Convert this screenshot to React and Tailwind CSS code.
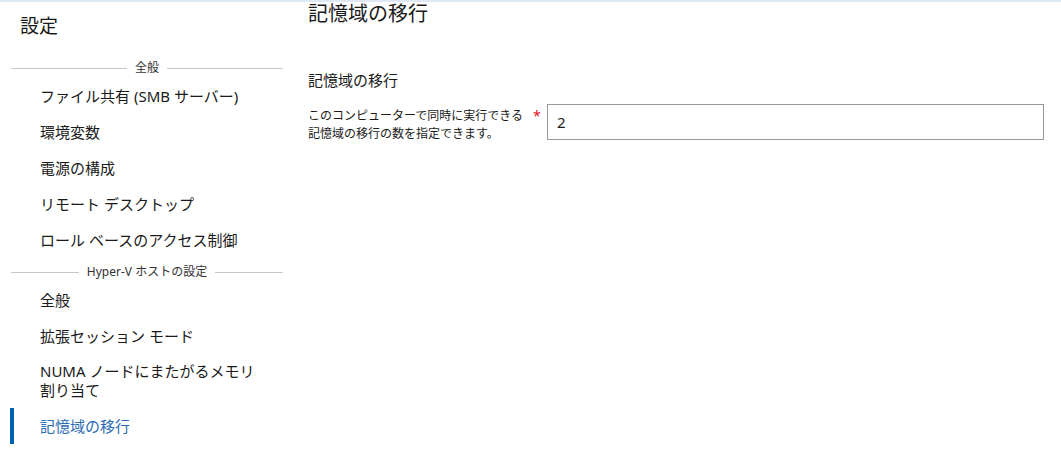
import React from "react";

const font = { fontFamily: '"Noto Sans", "Noto Sans CJK JP", sans-serif' };

const Divider = ({ label }) => (
  <div className="flex h-[20px] items-center gap-[8px] pl-[1px]">
    <div className="h-px flex-1 bg-[#c8c8c8]" />
    <span className="text-[12px] leading-[20px] text-[#333333]">{label}</span>
    <div className="h-px flex-1 bg-[#c8c8c8]" />
  </div>
);

const NavItem = ({ children, active }) => (
  <div className="relative flex min-h-[36px] items-center pl-[30px]">
    {active && <div className="absolute bottom-0 left-0 top-0 w-[4px] bg-[#0063b1]" />}
    <span
      className={
        "text-[15px] leading-[19px] " + (active ? "text-[#2b6cb5]" : "text-[#1a1a1a]")
      }
    >
      {children}
    </span>
  </div>
);

export default function App() {
  return (
    <div className="min-h-[452px] w-full border-t-2 border-[#dfe9f5] bg-white" style={font}>
      <div className="flex">
        <aside className="w-[294px] shrink-0 pl-[10px] pr-[11px]">
          <div className="flex h-[56px] items-start pl-[10px] pt-[12px]">
            <h1 className="text-[19px] leading-[24px] text-[#1a1a1a]">設定</h1>
          </div>
          <Divider label="全般" />
          <div className="flex flex-col">
            <NavItem>ファイル共有 (SMB サーバー)</NavItem>
            <NavItem>環境変数</NavItem>
            <NavItem>電源の構成</NavItem>
            <NavItem>リモート デスクトップ</NavItem>
            <NavItem>ロール ベースのアクセス制御</NavItem>
          </div>
          <div className="mt-[4px]">
            <Divider label="Hyper-V ホストの設定" />
          </div>
          <div className="flex flex-col">
            <NavItem>全般</NavItem>
            <NavItem>拡張セッション モード</NavItem>
            <div className="flex min-h-[54px] items-center pl-[30px]">
              <span className="text-[15px] leading-[19px] text-[#1a1a1a]">
                NUMA ノードにまたがるメモリ
                <br />
                割り当て
              </span>
            </div>
            <NavItem active>記憶域の移行</NavItem>
          </div>
        </aside>

        <main className="flex-1 pl-[14px] pr-[17px]">
          <h2 className="text-[20px] leading-[24px] text-[#1a1a1a]">記憶域の移行</h2>
          <h3 className="mt-[43px] text-[15px] leading-[22px] text-[#1a1a1a]">記憶域の移行</h3>
          <div className="mt-[13px] flex items-start">
            <div className="flex w-[239px] shrink-0 items-start pt-[3px]">
              <p className="w-[220px] text-[12px] leading-[18px] text-[#1a1a1a]">
                このコンピューターで同時に実行できる記憶域の移行の数を指定できます。
              </p>
              <span className="ml-[5px] text-[14px] leading-[18px] text-[#e81123]">*</span>
            </div>
            <input
              type="text"
              defaultValue="2"
              className="h-[36px] flex-1 border border-[#999999] bg-white px-[9px] text-[15px] text-[#1a1a1a] outline-none"
              style={font}
            />
          </div>
        </main>
      </div>
    </div>
  );
}
